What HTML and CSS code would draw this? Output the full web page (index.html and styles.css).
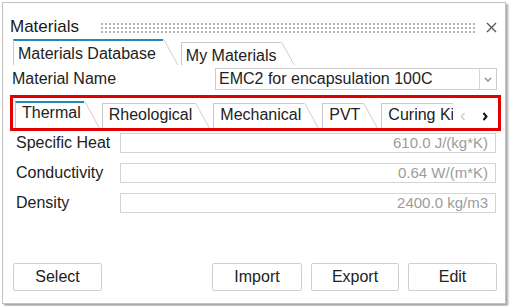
FILE: index.html
```html
<!DOCTYPE html>
<html lang="en">
<head>
  <meta charset="UTF-8" />
  <title>Materials</title>
  <link rel="stylesheet" href="styles.css">
</head>
<body>

  <div class="window">
    <div class="titlebar">
      <span class="title">Materials</span>
      <span class="grip"></span>
      <svg class="close" width="11" height="11" viewBox="0 0 11 11">
        <path d="M1 1 L10 10 M10 1 L1 10" stroke="#555" stroke-width="1.3" fill="none" />
      </svg>
    </div>

    <!-- Top level tabs -->
    <div class="tabs outer-tabs">
      <div class="tab active">Materials Database</div>
      <div class="tab">My Materials</div>
    </div>

    <div class="name-row">
      <span class="label">Material Name</span>
      <div class="select">
        <span class="select-text">EMC2 for encapsulation 100C</span>
        <span class="select-arrow">
          <svg width="8" height="5" viewBox="0 0 8 5">
            <path d="M1 1 L4 4 L7 1" stroke="#888" stroke-width="1.4" fill="none" />
          </svg>
        </span>
      </div>
    </div>

    <!-- Property tabs (highlighted) -->
    <div class="highlight">
      <div class="tabs inner-tabs">
        <div class="tab-scroll">
          <div class="tab active">Thermal</div>
          <div class="tab">Rheological</div>
          <div class="tab">Mechanical</div>
          <div class="tab">PVT</div>
          <div class="tab tab-last">Curing Ki</div>
        </div>
        <div class="tab-arrows">
          <svg width="6" height="9" viewBox="0 0 6 9">
            <path d="M4.5 1 L1.5 4.5 L4.5 8" stroke="#ccc" stroke-width="1.4" fill="none" />
          </svg>
          <svg width="6" height="9" viewBox="0 0 6 9">
            <path d="M1.5 1 L4.5 4.5 L1.5 8" stroke="#111" stroke-width="2" fill="none" />
          </svg>
        </div>
      </div>
    </div>

    <div class="fields">
      <div class="field">
        <span class="label">Specific Heat</span>
        <div class="value">610.0 J/(kg*K)</div>
      </div>
      <div class="field">
        <span class="label">Conductivity</span>
        <div class="value">0.64 W/(m*K)</div>
      </div>
      <div class="field">
        <span class="label">Density</span>
        <div class="value">2400.0 kg/m3</div>
      </div>
    </div>

    <div class="buttons">
      <button class="btn btn-select">Select</button>
      <button class="btn btn-import">Import</button>
      <button class="btn btn-export">Export</button>
      <button class="btn btn-edit">Edit</button>
    </div>
  </div>

</body>
</html>
```

FILE: styles.css
```css
* {
  box-sizing: border-box;
}

body {
  margin: 0;
  padding: 2px;
  background: #fff;
  font-family: "Liberation Sans", Arial, sans-serif;
  font-size: 16px;
  color: #222;
}

.window {
  width: 504px;
  height: 302px;
  background: #fff;
  border: 1px solid #c2c2c2;
  box-shadow: 2px 2px 2px rgba(0, 0, 0, 0.35);
  padding: 0 4px 0 7px;
  display: flex;
  flex-direction: column;
}

/* Title bar */
.titlebar {
  height: 36px;
  padding-top: 11px;
  display: flex;
  align-items: center;
}

.title {
  font-size: 17px;
  line-height: 20px;
  color: #1a1a1a;
}

.grip {
  flex: 1;
  height: 12px;
  margin: 2px 10px 0 21px;
  background-image: radial-gradient(circle, #b4b4b4 0.8px, transparent 1.2px);
  background-size: 4px 4px;
}

.close {
  margin-right: 4px;
  margin-top: 1px;
}

/* Tabs */
.tabs {
  display: flex;
  align-items: flex-end;
}

.tab {
  position: relative;
  line-height: 18px;
  white-space: nowrap;
  border-left: 1px solid #cacaca;
  border-top: 1px solid #cacaca;
  background: #fff;
}

.tab::after {
  content: '';
  position: absolute;
  top: -1px;
  bottom: 0;
  left: 100%;
  border-left: 1px solid #cfcfcf;
  transform-origin: top left;
  transform: skewX(29deg);
}

.tab.active {
  border-top: 2px solid #2489b8;
}

.tab.active::after {
  top: -2px;
}

.outer-tabs {
  height: 26px;
  margin-left: 3px;
}

.outer-tabs .tab {
  padding: 4px 7px 3px 4px;
  margin-right: 18px;
  height: 23px;
}

.outer-tabs .tab.active {
  height: 26px;
  padding-top: 4px;
}

.outer-tabs .tab:not(.active) {
  padding-right: 4px;
}

/* Material name row */
.name-row {
  display: flex;
  align-items: center;
  margin-top: 3px;
  padding-left: 2px;
}

.select {
  margin-left: auto;
  margin-right: 4px;
  width: 282px;
  height: 22px;
  border: 1px solid #cdcdcd;
  display: flex;
}

.select-text {
  flex: 1;
  padding-left: 3px;
  line-height: 20px;
}

.select-arrow {
  width: 17px;
  border-left: 1px solid #d6d6d6;
  display: flex;
  align-items: center;
  justify-content: center;
}

/* Red highlight frame */
.highlight {
  margin-top: 5px;
  border: 3px solid #e00000;
  height: 36px;
  padding: 3px 0 0 2px;
}

.inner-tabs {
  height: 27px;
}

.tab-scroll {
  flex: 1;
  display: flex;
  align-items: flex-end;
  overflow: hidden;
  height: 27px;
}

.inner-tabs .tab {
  height: 25px;
  padding: 2px 3px 0 6px;
  margin-right: 18px;
}

.inner-tabs .tab.active {
  height: 27px;
  padding-top: 1px;
}

.inner-tabs .tab-last {
  margin-right: 0;
  padding-right: 0;
}

.tab-arrows {
  width: 45px;
  height: 27px;
  display: flex;
  align-items: center;
  justify-content: space-between;
  padding: 3px 10px 0 7px;
}

/* Property fields */
.fields {
  display: flex;
  flex-direction: column;
  gap: 10px;
  margin-top: 2px;
  padding: 0 5px 0 6px;
}

.field {
  display: flex;
  align-items: center;
  height: 20px;
}

.field .label {
  width: 104px;
}

.value {
  flex: 1;
  height: 20px;
  border: 1px solid #d4d4d4;
  text-align: right;
  padding-right: 7px;
  font-size: 15px;
  line-height: 18px;
  color: #9c9c9c;
}

/* Bottom buttons */
.buttons {
  margin-top: auto;
  margin-bottom: 12px;
  padding: 0 4px 0 3px;
  display: flex;
  gap: 9px;
}

.btn {
  height: 28px;
  background: #fff;
  border: 1px solid #cfcfcf;
  border-radius: 2px;
  font-family: "Liberation Sans", Arial, sans-serif;
  font-size: 16px;
  color: #222;
  padding: 0;
}

.btn-select {
  width: 89px;
  margin-right: auto;
}

.btn-import {
  width: 90px;
}

.btn-export {
  width: 88px;
}

.btn-edit {
  width: 89px;
}
```
